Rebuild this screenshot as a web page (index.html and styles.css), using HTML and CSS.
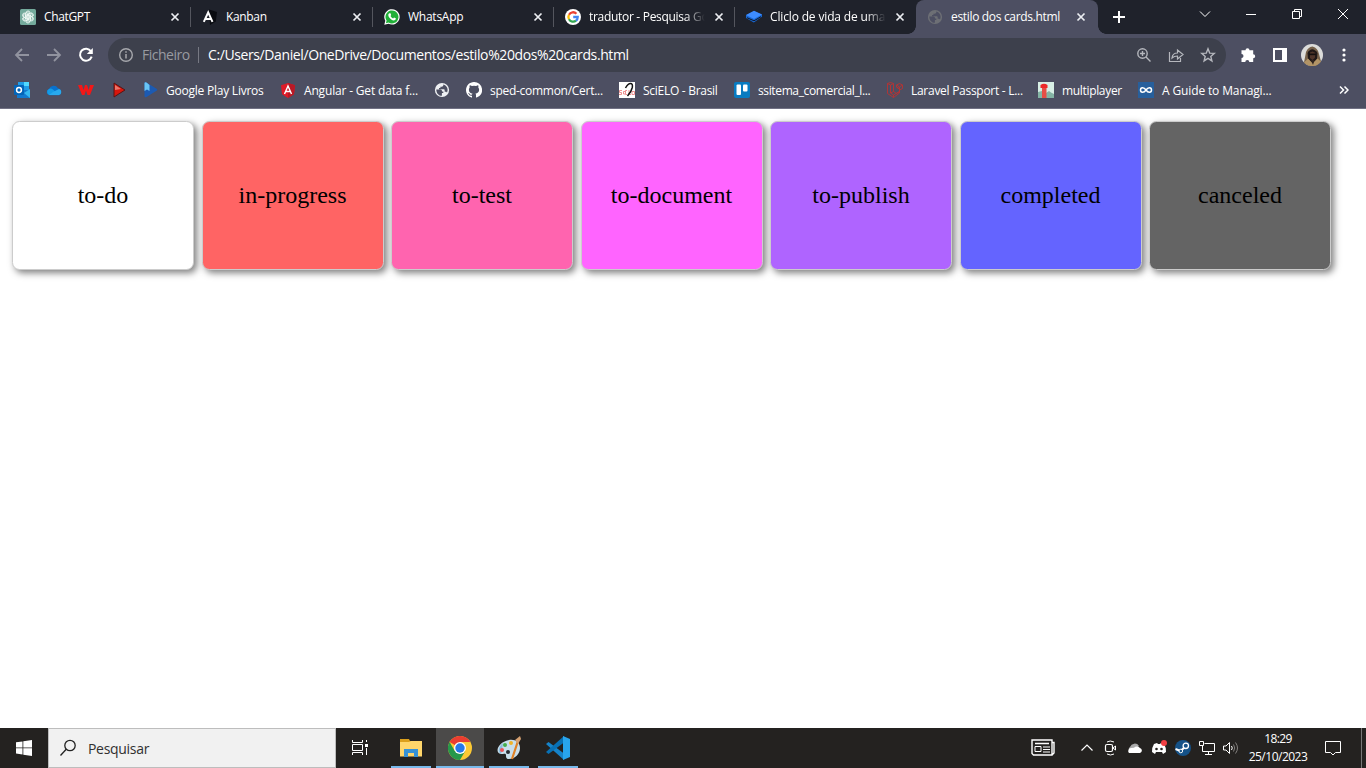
FILE: index.html
```html
<!DOCTYPE html>
<html lang="pt">
<head>
<meta charset="utf-8">
<title>estilo dos cards.html</title>
<link rel="stylesheet" href="styles.css">
</head>
<body>
<svg class="defs" aria-hidden="true">
  <symbol id="close" viewBox="0 0 10 10"><path d="M1.500 1.500l7 7m0-7l-7 7" fill="none" stroke="#eceef2" stroke-width="1.700"/></symbol>
  <symbol id="globe" viewBox="0 0 16 16"><circle cx="8" cy="8" r="7.100" fill="currentColor"/><path class="land" d="M2.300 7.400l4 .1c1.500 0 1.700.8 1.700 2h1.300v1.600H7.900v2.700C4.600 13.800 2.300 11.100 2.300 7.400zM9.300 2.500v.8c0 .8-.8 1.400-1.500 1.400H6.400v1.400H5v1.200h4.700c.8 0 1 .7 1 1.500v1h1.500l.8.700c1.600-3 .2-7-3.700-8z"/></symbol>
</svg>

<header class="browser">
  <div class="tabstrip">
    <div class="tab">
      <svg class="fav" viewBox="0 0 16 16"><rect width="16" height="16" rx="1.500" fill="#74aa9c"/><g fill="none" stroke="#f3faf7" stroke-width=".8"><path id="knot" d="M5.500 10.700V5.400a2.400 2.400 0 0 1 4.400-1.300M7 10V6l3.300-1.900a2.300 2.300 0 0 1 3 3"/><use href="#knot" transform="rotate(60 8 8)"/><use href="#knot" transform="rotate(120 8 8)"/><use href="#knot" transform="rotate(180 8 8)"/><use href="#knot" transform="rotate(240 8 8)"/><use href="#knot" transform="rotate(300 8 8)"/></g></svg>
      <span class="tab-title">ChatGPT</span><svg class="x"><use href="#close"/></svg>
    </div>
    <div class="tab">
      <svg class="fav" viewBox="0 0 16 16"><path d="M7 .5l8 2.500-1.200 9.500L8 16z" fill="#090b10"/><path d="M1.800 12.800L6.200 3.400l4.300 9.400M3.800 10h5" fill="none" stroke="#fff" stroke-width="2"/></svg>
      <span class="tab-title">Kanban</span><svg class="x"><use href="#close"/></svg>
    </div>
    <div class="tab">
      <svg class="fav" viewBox="0 0 16 16"><path d="M.3 15.800l1-4A7.700 7.700 0 1 1 4.500 14.800z" fill="#fff"/><path d="M1.900 14.200l.7-2.600A6.500 6.500 0 1 1 4.600 13.500z" fill="#20b038"/><path d="M5.500 4.200l1 .1.700 1.700-.7 1c.6 1.200 1.400 1.900 2.600 2.400l.9-1 1.800.8c.2 1.300-.8 2.200-2.200 2.200C7 11 4.300 8 4.300 6c0-.8.500-1.500 1.200-1.800z" fill="#fff"/></svg>
      <span class="tab-title title-wa">WhatsApp</span><svg class="x"><use href="#close"/></svg>
    </div>
    <div class="tab">
      <svg class="fav" viewBox="0 0 16 16"><circle cx="8" cy="8" r="8" fill="#fff"/><g fill="none" stroke-width="2.300"><path d="M4 5.700A4.600 4.600 0 0 1 11.400 4.700" stroke="#ea4335"/><path d="M4 5.700a4.700 4.700 0 0 0 0 4.600" stroke="#fbbc05"/><path d="M4 10.300a4.600 4.600 0 0 0 7 1.300" stroke="#34a853"/><path d="M8.200 8h4.500c0 1.600-.6 2.900-1.700 3.700" stroke="#4285f4"/></g></svg>
      <span class="tab-title fade title-search">tradutor - Pesquisa Go</span><svg class="x"><use href="#close"/></svg>
    </div>
    <div class="tab no-line">
      <svg class="fav" viewBox="0 0 16 16"><path d="M0 6.200l8-4 8 3.300v2.200L7.800 13.500 0 9z" fill="#1767d4"/><path d="M1 8.700l7 3.100 7-4.100" stroke="#101828" fill="none"/><path d="M0 6l8-4.200 8 3.700-8 4.400z" fill="#3d8cff"/></svg>
      <span class="tab-title fade title-life">Cliclo de vida de uma</span><svg class="x"><use href="#close"/></svg>
    </div>
    <div class="tab active">
      <svg class="fav dim"><use href="#globe"/></svg>
      <span class="tab-title title-cards">estilo dos cards.html</span><svg class="x"><use href="#close"/></svg>
    </div>
    <svg class="new-tab" viewBox="0 0 12 12"><path d="M6 0v12M0 6h12" stroke="#fff" stroke-width="2"/></svg>
    <div class="window-buttons">
      <svg viewBox="0 0 12 12"><path d="M1 3.500l5 5 5-5" /></svg>
      <svg viewBox="0 0 12 12"><path d="M1 6.500h10"/></svg>
      <svg viewBox="0 0 12 12"><path d="M1.500 3.500h7v7h-7zM3.500 3.500v-2h7v7h-2"/></svg>
      <svg viewBox="0 0 12 12"><path d="M1 1l10 10M11 1L1 11"/></svg>
    </div>
  </div>

  <div class="toolbar">
    <div class="nav">
      <svg viewBox="0 0 16 16"><path d="M15 8H2M8 2L2 8l6 6" stroke="#91939f"/></svg>
      <svg viewBox="0 0 16 16"><path d="M1 8h13M8 2l6 6-6 6" stroke="#91939f"/></svg>
      <svg viewBox="0 0 16 16"><path d="M13 4.300A6 6 0 1 0 13.700 9.700" stroke="#fff" stroke-width="2"/><path d="M14.800 1v6H8.800z" fill="#fff" stroke="none"/></svg>
    </div>
    <div class="omnibox">
      <svg class="info" viewBox="0 0 16 16"><circle cx="8" cy="8" r="6.300" fill="none" stroke="#a6a7ac" stroke-width="1.400"/><path d="M8 7v4.500M8 4.300v1.500" stroke="#a6a7ac" stroke-width="1.500"/></svg>
      <span class="scheme">Ficheiro</span><span class="bar"></span><span class="url">C:/Users/Daniel/OneDrive/Documentos/estilo%20dos%20cards.html</span>
      <div class="actions">
        <svg viewBox="0 0 16 16"><circle cx="6.500" cy="6.500" r="4.700"/><path d="M10 10l4.500 4.500M4 6.500h5M6.500 4v5"/></svg>
        <svg viewBox="0 0 16 16"><path d="M1.500 5v9.500h11V11M4 11c.3-3 2.200-5 5.500-5V3L15 7.500 9.500 12V9C7 9 5.500 9.500 4 11z" stroke-width="1.200"/></svg>
        <svg viewBox="0 0 16 16"><path d="M8 1.800l1.700 4.300 4.600.3-3.500 3 1.100 4.500L8 11.400l-3.900 2.500 1.100-4.500-3.500-3 4.600-.3z"/></svg>
      </div>
    </div>
    <div class="extensions">
      <svg viewBox="0 0 16 16"><path d="M1.500 3.300h4a2 2 0 1 1 4 0h3.700v3.900a2 2 0 1 1 0 4V15H9.300a2 2 0 0 0-4 0H1.500v-4a2 2 0 0 0 0-4z" fill="#fff"/></svg>
      <svg viewBox="0 0 16 16"><path d="M1 1h14v14H1zM3 3v10h7V3z" fill="#fff" fill-rule="evenodd"/></svg>
      <svg class="avatar" viewBox="0 0 22 22"><circle cx="11" cy="11" r="11" fill="#dcdcda"/><path d="M3 18.500L5 8q2-5 6.500-5.500Q17 4 18 10l2 7.500A11 11 0 0 1 3 18.500z" fill="#76614a"/><path d="M6.500 9Q11 1.500 16.500 9L16 15l-4 4-5-4z" fill="#201817"/><path d="M9 8.500l2.500-1L14.500 9l-.7 5-2.300 2L9 14z" fill="#50352a"/><path d="M8 9.500h7v1.700H8z" fill="#15100f"/><path d="M3 18.500l4-4 4.500 5 5-5 3.500 3A11 11 0 0 1 3 18.500z" fill="#b29466"/><path d="M10 16l2 5 1.500-5z" fill="#30251f"/></svg>
      <svg viewBox="0 0 16 16"><g fill="#fff"><circle cx="8" cy="3" r="1.600"/><circle cx="8" cy="8" r="1.600"/><circle cx="8" cy="13" r="1.600"/></g></svg>
    </div>
  </div>

  <nav class="bookmarks">
    <a><svg viewBox="0 0 16 16"><path d="M4 0h11v9H4z" fill="#1f9ce6"/><path d="M10 0h5v4h-5z" fill="#50d9ff"/><path d="M3 8h13v8H3z" fill="#1279cf"/><path d="M10 11l6-4v9z" fill="#35b8f1"/><rect y="3" width="10" height="10" rx="1" fill="#0364b8"/><circle cx="5" cy="8" r="2.400" fill="none" stroke="#fff" stroke-width="1.500"/></svg></a>
    <a><svg viewBox="0 0 16 16"><path d="M3 7a5 5 0 0 1 9-.8 3.700 3.700 0 0 1 1 7H3.500A3.200 3.200 0 0 1 3 7z" fill="#0871ce"/><path d="M3 7q2-1 4 .5l6 5.500H3.500A3.200 3.200 0 0 1 3 7z" fill="#159be5"/><path d="M7 10l6-3a3.100 3.100 0 0 1 0 6H3z" fill="#28a9ed"/></svg></a>
    <a><svg viewBox="0 0 16 16"><path d="M0 3h4l1.500 5L7 3h2l1.700 5L12 3h4l-4 10H9.500L8 8.500 6.500 13H4z" fill="#f31717"/></svg></a>
    <a><svg viewBox="0 0 16 16"><path d="M3 1l11 7-11 7z" fill="#d8160c" stroke="#591414"/><path d="M4 3l6 4-6 1z" fill="#ed766a"/></svg></a>
    <a><svg viewBox="0 0 16 16"><path d="M1.500 1.500q0-2 2-1l10 6.200q1.500 1 0 2L3.500 15q-2 1-2-1z" fill="#1c5ab2"/><path d="M1.500 1q0-1 2-.5L6.500 3v6L4 7.500 1.500 9z" fill="#69c5f5"/></svg><span class="b1">Google Play Livros</span></a>
    <a><svg viewBox="0 0 16 16"><path d="M8 1l7 2.300-1 9L8 16l-6-3.700-1-9z" fill="#dd1b28"/><path d="M8 1l7 2.300-1 9L8 16z" fill="#b91925"/><path d="M4.500 12L8 4l3.500 8M6 9.500h4" stroke="#fff" stroke-width="1.400" fill="none"/></svg><span class="b2">Angular - Get data f...</span></a>
    <a><svg class="light"><use href="#globe"/></svg></a>
    <a><svg viewBox="0 0 16 16"><path d="M8 0C3.600 0 0 3.600 0 8c0 3.500 2.300 6.500 5.500 7.600.4.100.5-.2.500-.4v-1.500c-2.200.5-2.700-.9-2.700-.9-.4-.9-.9-1.200-.9-1.200-.7-.5.100-.5.100-.5.800.1 1.200.8 1.200.8.700 1.200 1.900.9 2.300.7.100-.5.300-.9.500-1.100-1.800-.2-3.600-.9-3.600-4 0-.9.300-1.600.8-2.100-.1-.2-.4-1 .1-2.100 0 0 .7-.2 2.200.8a7.700 7.700 0 0 1 4 0c1.500-1 2.200-.8 2.200-.8.400 1.100.2 1.900.1 2.100.5.600.8 1.300.8 2.100 0 3.100-1.900 3.800-3.700 4 .3.300.6.800.6 1.500v2.200c0 .200.100.500.600.400A8 8 0 0 0 8 0z" fill="#fff"/></svg><span class="b3">sped-common/Cert...</span></a>
    <a><svg viewBox="0 0 16 16"><path d="M0 0h16v16H0z" fill="#fff"/><path d="M3 8.500H.5v2h2v2H0M6 9.500H4.500v2.500H6M8 8.500H6.500v4H8M10 8v4.500h2M13 9.500h2.500v3H13z" stroke="#ec8585" fill="none" stroke-width=".9"/><path d="M6.500 6Q9 1.500 11.500 1.500 14 1.500 13.300 5.500 12.500 9.500 8.500 14" fill="none" stroke="#111" stroke-width="1.500"/></svg><span class="b4">SciELO - Brasil</span></a>
    <a><svg viewBox="0 0 16 16"><rect width="16" height="16" rx="2" fill="#087bc1"/><rect x="2.500" y="2.500" width="4.500" height="10.500" rx="1" fill="#fff"/><rect x="9" y="2.500" width="4.500" height="7" rx="1" fill="#fff"/></svg><span class="b5">ssitema_comercial_l...</span></a>
    <a><svg viewBox="0 0 16 16"><path d="M.5 1.500l3-1 3 1v8l3 2 3-2V7l-3-2V3l3-1.500L15.500 3v3.500l-3 1.500v3L6.500 15.500l-6-4zM.5 1.500l3 1.500 3-1.500M3.500 3v8l3-1.500M3.500 11l3 2 6-3.500M9.500 3l3 2 3-2M12.500 5v3M6.500 15.500V13M9.500 5l3 2" fill="none" stroke="#b93232" stroke-width=".9"/></svg><span class="b6">Laravel Passport - L...</span></a>
    <a><svg viewBox="0 0 16 16"><path d="M0 0h16v16H0z" fill="#d8efe5"/><path d="M0 10l4-1v7H0zM8 11l3-2 2 1.500L16 12v4H8z" fill="#84b4a4"/><path d="M4 4h4.500v12H4z" fill="#e74e46"/><path d="M2.500 3Q6 .5 9.500 3v3h-7z" fill="#ed2929"/></svg><span class="b7">multiplayer</span></a>
    <a><svg viewBox="0 0 16 16"><path d="M0 0h16v16H0z" fill="#275f9c"/><path d="M8 8C5.800 4.700 2.500 5.200 2.500 8S5.800 11.300 8 8s5.500-2.800 5.500 0S10.200 11.300 8 8" fill="none" stroke="#fff" stroke-width="1.500"/></svg><span class="b8">A Guide to Managi...</span></a>
    <a><svg class="more" viewBox="0 0 10 10"><path d="M1 1.500L4.500 5 1 8.500M5.500 1.500L9 5 5.500 8.500" fill="none" stroke="#fff" stroke-width="1.500"/></svg></a>
  </nav>
</header>

<main class="page">
  <div class="card to-do">to-do</div>
  <div class="card in-progress">in-progress</div>
  <div class="card to-test">to-test</div>
  <div class="card to-document">to-document</div>
  <div class="card to-publish">to-publish</div>
  <div class="card completed">completed</div>
  <div class="card canceled">canceled</div>
</main>

<footer class="taskbar">
  <div class="start"><svg viewBox="0 0 16 16"><path d="M0 2.300l6.500-.9v6.100H0zM7.300 1.300L16 0v7.500H7.300zM0 8.300h6.500v6.200L0 13.600zM7.300 8.300H16V16l-8.700-1.300z" fill="#fff"/></svg></div>
  <div class="search"><svg viewBox="0 0 18 18"><circle cx="11" cy="6.500" r="5.200"/><path d="M7.200 10.200L1.500 16.500"/></svg><span>Pesquisar</span></div>
  <div class="task-view"><svg viewBox="0 0 18 18"><path d="M1.500 1v2.500h10V1M1.500 16v-2.500h10V16M1.500 5.500h10v6h-10zM15.500 1v2M15.500 9v7" fill="none" stroke="#fff"/><path d="M14 5h3v3h-3z" fill="#fff"/></svg></div>
  <div class="apps">
    <div class="app"><svg viewBox="0 0 24 24"><path d="M1 3h9l1 2h12v15H1z" fill="#dca01c"/><path d="M1 6h9l2-1h11v15.500H1z" fill="#ffd66b"/><path d="M5 21v-8h14v8h-4v-4h-6v4z" fill="#3792d5"/></svg></div>
    <div class="app current"><svg viewBox="0 0 24 24"><circle cx="12" cy="12" r="12" fill="#fcc934"/><path d="M12 12L1.600 6A12 12 0 0 1 22.400 6H12z" fill="#ea3d31"/><path d="M1.600 6A12 12 0 0 0 12 24l5.200-9L12 12l-5.200 3z" fill="#26984b"/><circle cx="12" cy="12" r="6" fill="#fff"/><circle cx="12" cy="12" r="4.700" fill="#2879e9"/></svg></div>
    <div class="app"><svg viewBox="0 0 24 24"><path d="M12 4c6-1 11 2 11 8s-5 11-11 11c-3 0-3-2-3-4s-3-1-5-1c-7-1-3-12 8-14z" fill="#c9dfeb"/><path d="M4 18c-4-2-2-8 2-11l-1 8z" fill="#8dbddd"/><circle cx="8" cy="9" r="2" fill="#45ae4c"/><circle cx="14" cy="7" r="2" fill="#efb42b"/><circle cx="5" cy="14" r="2" fill="#ee5558"/><circle cx="11" cy="16" r="2" fill="#252b32"/><path d="M21 5l-6 18" stroke="#df8126" stroke-width="2.200"/><path d="M18 4l5-4 1 3-3 5z" fill="#d5a171"/></svg></div>
    <div class="app"><svg viewBox="0 0 24 24"><path d="M0 8l2.500-2L18 17.500V24L0 8z" fill="#1684ca"/><path d="M0 16l2.500 2L18 6.500V0L0 16z" fill="#0871b5"/><path d="M17 0l7 3v18l-7 3z" fill="#28a5ed"/></svg></div>
  </div>
  <div class="tray">
    <svg class="news" viewBox="0 0 24 18"><path d="M1 1h20v15H2.500L1 14.500zM21 3.500h2V14l-2 2M4 4.500h14" fill="none" stroke="#fff" stroke-width="1.400"/><path d="M4 7.500h6v5H4zM12 8h7M12 10.500h7M12 13h7" fill="none" stroke="#fff"/></svg>
    <svg class="chevron" viewBox="0 0 14 14"><path d="M1.500 9.500L7 4l5.500 5.500" fill="none" stroke="#fff" stroke-width="1.200"/></svg>
    <svg class="meet" viewBox="0 0 14 16"><path d="M3 2q3-2 7 0M3 14q3.500 2 7 0" fill="none" stroke="#fff"/><rect x="1.500" y="4.500" width="7" height="7" rx="1.500" fill="none" stroke="#fff" stroke-width="1.200"/><path d="M9 8l2.500-2v4z" fill="none" stroke="#fff"/></svg>
    <svg class="cloud" viewBox="0 0 16 16"><path d="M3 7a5 5 0 0 1 9-1l-6 6H3A3 3 0 0 1 3 7z" fill="#aaa"/><path d="M2 13a3 3 0 0 1 2-5l3-.3A4 4 0 0 1 13 8a2.600 2.600 0 0 1 0 5z" fill="#fff"/></svg>
    <svg class="discord" viewBox="0 0 16 16"><path d="M3 4l3-1 1 1h2l1-1 3 1q2.500 4 2 8l-3 2-1-2H5l-1 2-3-2Q.5 8 3 4z" fill="#fff"/><circle cx="5.500" cy="9" r="1.300" fill="#252220"/><circle cx="10.500" cy="9" r="1.300" fill="#252220"/><circle cx="13" cy="3" r="3" fill="#f23f43"/></svg>
    <svg class="steam" viewBox="0 0 16 16"><circle cx="8" cy="8" r="8" fill="#155288"/><path d="M.5 9l5 2L10 7" fill="none" stroke="#fff" stroke-width="2"/><circle cx="10.800" cy="5.800" r="2.700" fill="#155288" stroke="#fff" stroke-width="1.300"/><circle cx="5.800" cy="11" r="1.800" fill="#155288" stroke="#fff"/></svg>
    <svg class="net" viewBox="0 0 16 16"><path d="M5.500 3.500h10v8H3.500V6M.5 1.500h4v4h-4zM9.500 11.500v3M6 14.500h7" fill="none" stroke="#fff"/></svg>
    <svg class="sound" viewBox="0 0 16 16"><path d="M.5 6h2.500L6.500 2.500v11L3 10H.5z" fill="none" stroke="#fff"/><path d="M8.500 6q1.500 2 0 4" fill="none" stroke="#fff"/><path d="M10.500 4.500q2.500 3.500 0 7M12.500 2.500q4 5.500 0 11" fill="none" stroke="#84817f"/></svg>
    <div class="clock"><span class="time">18:29</span><span class="date">25/10/2023</span></div>
    <svg class="notice" viewBox="0 0 16 16"><path d="M.5 1.500h15v11h-5L8 15l-2.500-2.500h-5z" fill="none" stroke="#fff"/></svg>
    <span class="peek"></span>
  </div>
</footer>
</body>
</html>
```

FILE: styles.css
```css
* { box-sizing: border-box; }
body {
  margin: 0;
  width: 1366px;
  height: 768px;
  overflow: hidden;
  display: flex;
  flex-direction: column;
  background: #fff;
  font-family: "Open Sans", "Noto Sans", sans-serif;
  font-size: 12px;
}
svg { display: block; flex: none; }
span { white-space: nowrap; }
.defs { width: 0; height: 0; position: absolute; }
.browser { height: 109px; background: #4d4f62; border-bottom: 1px solid #717184; color: #fff; }

.tabstrip { height: 34px; display: flex; align-items: center; background: #1f222b; padding-left: 9px; }
.tab { flex: none; position: relative; width: 181px; height: 34px; display: flex; align-items: center; padding: 0 10px 0 11px; gap: 8px; }
.tab:first-child { width: 182px; }
.tab::after { content: ""; position: absolute; right: 0; top: 7px; width: 1px; height: 20px; background: #54565e; }
.tab.no-line::after, .tab.active::after { display: none; }
.tab:nth-child(2) { width: 182px; }
.tab.no-line { width: 181px; }
.fav { width: 16px; height: 16px; }
.tab-title { width: 118px; letter-spacing: -.35px; line-height: 20px; }
.tab:nth-child(n+3) .tab-title { width: 117px; }
.title-wa { letter-spacing: -.25px; }
.title-search { letter-spacing: -.3px; }
.title-life { letter-spacing: -.15px; }
.title-cards { letter-spacing: -.33px; }
.fade { -webkit-mask-image: linear-gradient(90deg, #000 82%, transparent 99%); mask-image: linear-gradient(90deg, #000 82%, transparent 99%); }
.x { width: 10px; height: 10px; }
.tab.active { background: #4d4f62; border-radius: 8px 8px 0 0; width: 182px; }
.active::before {
  content: ""; position: absolute; left: -8px; right: -8px; bottom: 0; height: 8px;
  background: radial-gradient(circle at 0 0, transparent 7.5px, #4d4f62 8px) left / 8px 8px no-repeat,
    radial-gradient(circle at 100% 0, transparent 7.5px, #4d4f62 8px) right / 8px 8px no-repeat;
}
.dim { color: #6d6f75; }
.land { fill: #4d4f62; }
.light { color: #eef0f3; }
.new-tab { width: 12px; height: 12px; margin-left: 15px; }
.window-buttons { margin-left: auto; display: flex; gap: 34px; padding: 0 17px 6px 0; }
.window-buttons svg { width: 12px; height: 12px; fill: none; stroke: #fff; stroke-width: 1; }

.toolbar { display: flex; align-items: center; height: 42px; padding-left: 14px; }
.nav { flex: none; display: flex; gap: 16px; width: 94px; }
.nav svg { width: 16px; height: 16px; fill: none; stroke-width: 1.8; }
.omnibox { flex: none; width: 1118px; height: 34px; border-radius: 17px; background: #3d404c; display: flex; align-items: center; padding: 0 10px; font-size: 14px; }
.info { width: 16px; height: 16px; }
.scheme { width: 48px; margin-left: 8px; color: #999ba1; letter-spacing: -.5px; }
.bar { width: 1px; height: 16px; background: #777983; margin: 0 9px 0 8px; }
.url { letter-spacing: -.395px; }
.scheme, .url { padding-bottom: 1px; }
.actions { display: flex; gap: 16px; margin-left: auto; }
.actions svg { width: 16px; height: 16px; fill: none; stroke: #b5b7bd; stroke-width: 1.4; }
.extensions { flex: none; display: flex; align-items: center; padding-left: 14px; }
.extensions svg { width: 16px; height: 16px; margin-right: 16px; }
.extensions .avatar { width: 22px; height: 22px; margin-left: -3px; margin-right: 13px; }
.extensions svg:last-child { margin-right: 0; }

.bookmarks { height: 28px; padding-left: 14px; display: grid; align-items: center; grid-template-columns: 32px 32px 33px 32px 137px 154px 32px 153px 115px 153px 151px 100px 201px 14px; }
.bookmarks a { display: flex; align-items: center; gap: 8px; height: 20px; }
.bookmarks svg { width: 16px; height: 16px; }
.bookmarks .more { width: 10px; height: 10px; }
.bookmarks span { letter-spacing: -.33px; }
.bookmarks .b1 { letter-spacing: -.23px; margin-left: -1px; }
.bookmarks .b2 { letter-spacing: -.17px; }
.bookmarks .b3 { letter-spacing: -.28px; }
.bookmarks .b4 { letter-spacing: -.28px; }
.bookmarks .b5 { letter-spacing: -.37px; }
.bookmarks .b6 { letter-spacing: -.28px; }
.bookmarks .b8 { letter-spacing: -.13px; }

.page { flex: 1; display: flex; align-items: flex-start; gap: 7.5px; padding: 12px; }
.card {
  flex: none; width: 182px; height: 149px; display: flex; align-items: center; justify-content: center;
  border: 1px solid #ccc; border-radius: 7.5px; box-shadow: 3px 3px 7.5px rgba(0, 0, 0, .5);
  font: 24px "Liberation Serif", "Times New Roman", serif; color: #000;
}
.to-do { background: #fff; }
.in-progress { background: #ff6464; }
.to-test { background: #ff64af; }
.to-document { background: #ff64ff; }
.to-publish { background: #af64ff; }
.completed { background: #6464ff; }
.canceled { background: #646464; }

.taskbar { height: 40px; display: flex; background: #242220; color: #fff; }
.start { width: 48px; display: flex; align-items: center; justify-content: center; }
.start svg { width: 16px; height: 16px; }
.search { width: 288px; background: #f1f1f1; border: 1px solid #bdbdbd; display: flex; align-items: center; gap: 11px; padding-left: 10px; color: #303030; font-size: 14px; letter-spacing: -.3px; }
.search svg { width: 18px; height: 18px; fill: none; stroke: #222; stroke-width: 1.3; }
.task-view { width: 51px; display: flex; align-items: center; padding-left: 15px; }
.task-view svg { width: 18px; height: 18px; }
.apps { display: flex; gap: 1px; }
.app { width: 48px; display: flex; align-items: center; justify-content: center; background: linear-gradient(#78b9eb, #78b9eb) center bottom / 40px 2px no-repeat; }
.app svg { width: 24px; height: 24px; }
.current { background: linear-gradient(#78b9eb, #78b9eb) bottom / 48px 2px no-repeat, #4b4a49; }
.tray { margin-left: auto; display: flex; align-items: center; width: 335px; }
.tray svg { width: 16px; height: 16px; }
.tray .news { width: 24px; height: 18px; }
.tray .chevron { width: 14px; height: 14px; margin-left: 25px; }
.tray .meet { width: 14px; margin-left: 10px; }
.cloud { margin-left: 9px; }
.discord, .net, .sound { margin-left: 8px; }
.steam { margin-left: 8px; }
.clock { width: 60px; margin-left: 9px; display: flex; flex-direction: column; align-items: center; line-height: 18px; padding-bottom: 1px; }
.time { letter-spacing: -.6px; }
.date { letter-spacing: -.5px; }
.notice { margin-left: 17px; }
.peek { width: 1px; height: 40px; background: #777; margin-left: 20px; }
```
